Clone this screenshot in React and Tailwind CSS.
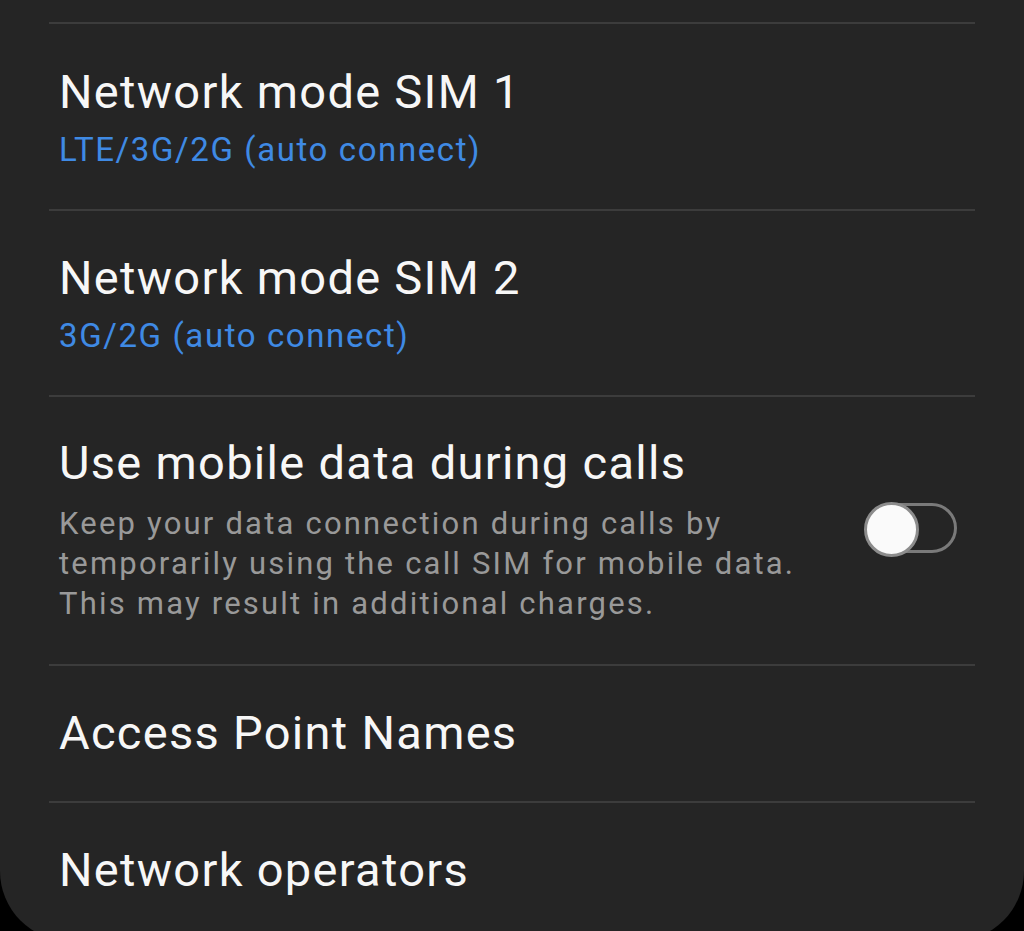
import React from 'react';

const font = { fontFamily: 'Roboto, "Noto Sans", sans-serif' };

const Divider = () => <div className="ml-[49px] mr-[49px] h-[2px] bg-[#3c3c3c]" />;

const Toggle = () => (
  <div className="relative mt-[67px] mr-[67px] h-[54px] w-[93px] shrink-0">
    <div className="absolute left-[4px] right-0 top-[1px] h-[50px] rounded-full border-[3px] border-[#7a7a7a]" />
    <div className="absolute left-0 top-0 h-[55px] w-[55px] rounded-full border-[3px] border-[#8c8c8c] bg-[#fafafa]" />
  </div>
);

const titleCls = 'text-[47px] leading-[56px] tracking-[1.3px] text-[#f7f7f7]';
const valueCls = 'mt-[10px] text-[33px] leading-[40px] tracking-[1.6px] text-[#3f8ae4]';

export default function App() {
  return (
    <div className="min-h-screen bg-black" style={font}>
      <div className="rounded-b-[70px] bg-[#252525] pt-[22px] pb-[43px]">
        <Divider />
        <div className="pl-[59px] pt-[40px] pb-[39px]">
          <div className={titleCls}>Network mode SIM 1</div>
          <div className={valueCls}>LTE/3G/2G (auto connect)</div>
        </div>

        <Divider />
        <div className="pl-[59px] pt-[39px] pb-[39px]">
          <div className={titleCls}>Network mode SIM 2</div>
          <div className={valueCls}>3G/2G (auto connect)</div>
        </div>

        <Divider />
        <div className="flex items-start justify-between pt-[38px] pb-[40px]">
          <div className="pl-[59px]">
            <div className={titleCls}>Use mobile data during calls</div>
            <div className="mt-[13px] text-[31px] leading-[40px] tracking-[2.2px] text-[#999999]">
              Keep your data connection during calls by
              <br />
              temporarily using the call SIM for mobile data.
              <br />
              This may result in additional charges.
            </div>
          </div>
          <Toggle />
        </div>

        <Divider />
        <div className="pl-[59px] pt-[39px] pb-[40px]">
          <div className={titleCls}>Access Point Names</div>
        </div>

        <Divider />
        <div className="pl-[59px] pt-[39px]">
          <div className={titleCls}>Network operators</div>
        </div>
      </div>
    </div>
  );
}
